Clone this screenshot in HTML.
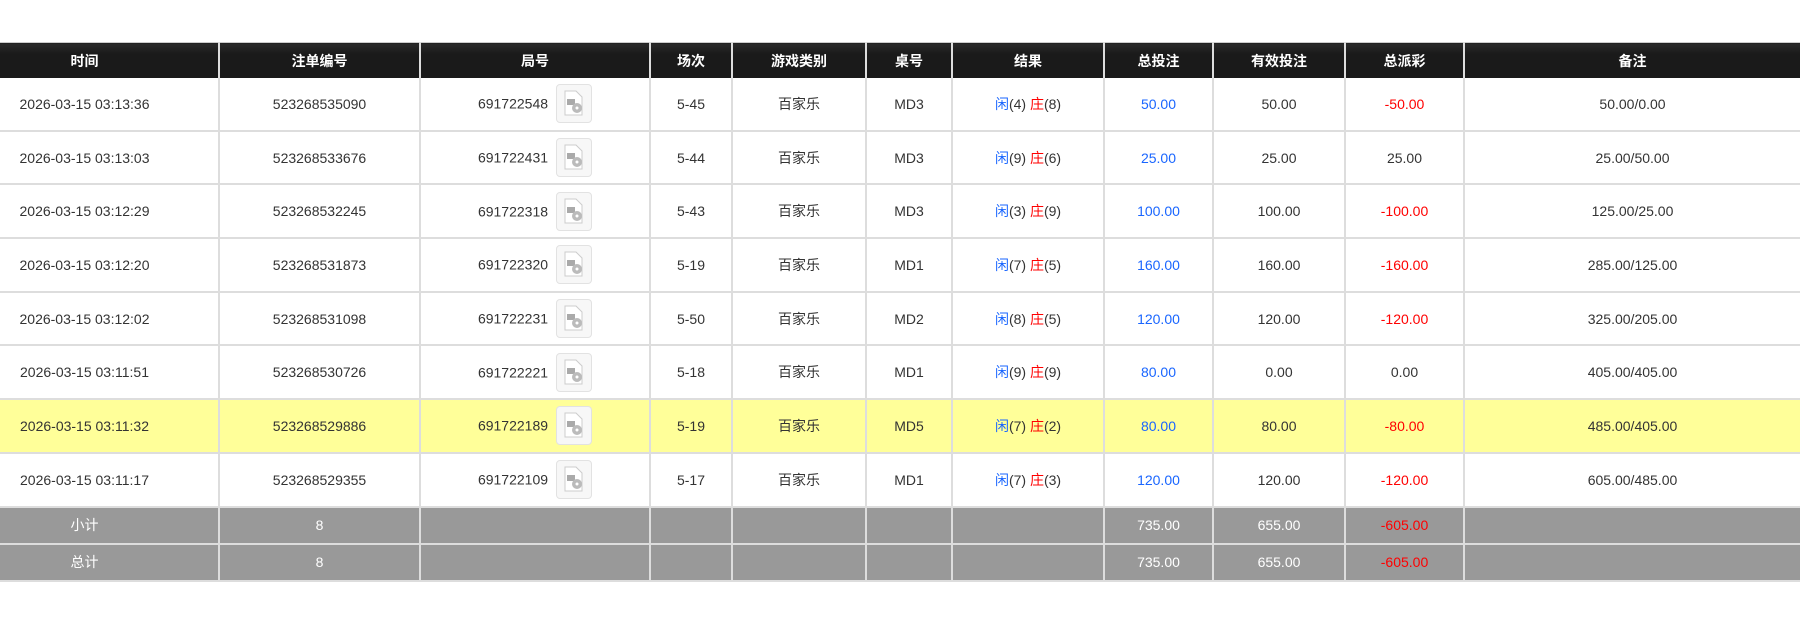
<!DOCTYPE html>
<html><head><meta charset="utf-8"><style>
body{margin:0;background:#fff;width:1800px;height:633px;overflow:hidden;font-family:"Liberation Sans","Noto Sans CJK SC",sans-serif;}
table{position:absolute;top:42px;left:0;width:1800px;border-collapse:collapse;table-layout:fixed;font-size:14px;color:#333;}
th{background:linear-gradient(#2a2a2a,#1a1a1a 30%,#1a1a1a);color:#fff;font-weight:bold;height:35px;padding:0;border-left:2px solid #ddd;border-top:1px solid #ccc;text-align:center;}
th:first-child,td:first-child{border-left:none;padding-right:49px}
td{height:51.7px;padding:0;text-align:center;border-left:2px solid #ddd;border-bottom:2px solid #ddd;}
tr.y td{background:#ffff99}
tr.g td{background:#999;color:#fff;height:35px;border-bottom:2px solid #ddd}
.b{color:#1a66ff}.r{color:#f00}
.ic{display:inline-block;vertical-align:middle;width:34px;height:37px;border:1px solid #e2e2e2;border-radius:4px;background:#f7f7f7;margin-left:8px;position:relative}
.ic svg{position:absolute;left:6px;top:5px}
.n{vertical-align:middle}
</style></head><body>
<table>
<colgroup><col style="width:219px"><col style="width:201px"><col style="width:230px"><col style="width:82px"><col style="width:134px"><col style="width:86px"><col style="width:152px"><col style="width:109px"><col style="width:132px"><col style="width:119px"><col style="width:336px"></colgroup>
<tr><th>时间</th><th>注单编号</th><th>局号</th><th>场次</th><th>游戏类别</th><th>桌号</th><th>结果</th><th>总投注</th><th>有效投注</th><th>总派彩</th><th>备注</th></tr>
<tr><td>2026-03-15 03:13:36</td><td>523268535090</td><td><span class="n">691722548</span><span class="ic"><svg width="22" height="26" viewBox="0 0 22 26"><path d="M2 1h11l6 6v18H2z" fill="#fff" stroke="#ccc"/><rect x="4" y="9" width="8" height="6" fill="#aaa"/><circle cx="14" cy="18" r="5" fill="#bbb"/><circle cx="14" cy="18" r="1.5" fill="#fff"/></svg></span></td><td>5-45</td><td>百家乐</td><td>MD3</td><td><span class="b">闲</span>(4) <span class="r">庄</span>(8)</td><td class="b">50.00</td><td>50.00</td><td class="r">-50.00</td><td>50.00/0.00</td></tr>
<tr><td>2026-03-15 03:13:03</td><td>523268533676</td><td><span class="n">691722431</span><span class="ic"><svg width="22" height="26" viewBox="0 0 22 26"><path d="M2 1h11l6 6v18H2z" fill="#fff" stroke="#ccc"/><rect x="4" y="9" width="8" height="6" fill="#aaa"/><circle cx="14" cy="18" r="5" fill="#bbb"/><circle cx="14" cy="18" r="1.5" fill="#fff"/></svg></span></td><td>5-44</td><td>百家乐</td><td>MD3</td><td><span class="b">闲</span>(9) <span class="r">庄</span>(6)</td><td class="b">25.00</td><td>25.00</td><td>25.00</td><td>25.00/50.00</td></tr>
<tr><td>2026-03-15 03:12:29</td><td>523268532245</td><td><span class="n">691722318</span><span class="ic"><svg width="22" height="26" viewBox="0 0 22 26"><path d="M2 1h11l6 6v18H2z" fill="#fff" stroke="#ccc"/><rect x="4" y="9" width="8" height="6" fill="#aaa"/><circle cx="14" cy="18" r="5" fill="#bbb"/><circle cx="14" cy="18" r="1.5" fill="#fff"/></svg></span></td><td>5-43</td><td>百家乐</td><td>MD3</td><td><span class="b">闲</span>(3) <span class="r">庄</span>(9)</td><td class="b">100.00</td><td>100.00</td><td class="r">-100.00</td><td>125.00/25.00</td></tr>
<tr><td>2026-03-15 03:12:20</td><td>523268531873</td><td><span class="n">691722320</span><span class="ic"><svg width="22" height="26" viewBox="0 0 22 26"><path d="M2 1h11l6 6v18H2z" fill="#fff" stroke="#ccc"/><rect x="4" y="9" width="8" height="6" fill="#aaa"/><circle cx="14" cy="18" r="5" fill="#bbb"/><circle cx="14" cy="18" r="1.5" fill="#fff"/></svg></span></td><td>5-19</td><td>百家乐</td><td>MD1</td><td><span class="b">闲</span>(7) <span class="r">庄</span>(5)</td><td class="b">160.00</td><td>160.00</td><td class="r">-160.00</td><td>285.00/125.00</td></tr>
<tr><td>2026-03-15 03:12:02</td><td>523268531098</td><td><span class="n">691722231</span><span class="ic"><svg width="22" height="26" viewBox="0 0 22 26"><path d="M2 1h11l6 6v18H2z" fill="#fff" stroke="#ccc"/><rect x="4" y="9" width="8" height="6" fill="#aaa"/><circle cx="14" cy="18" r="5" fill="#bbb"/><circle cx="14" cy="18" r="1.5" fill="#fff"/></svg></span></td><td>5-50</td><td>百家乐</td><td>MD2</td><td><span class="b">闲</span>(8) <span class="r">庄</span>(5)</td><td class="b">120.00</td><td>120.00</td><td class="r">-120.00</td><td>325.00/205.00</td></tr>
<tr><td>2026-03-15 03:11:51</td><td>523268530726</td><td><span class="n">691722221</span><span class="ic"><svg width="22" height="26" viewBox="0 0 22 26"><path d="M2 1h11l6 6v18H2z" fill="#fff" stroke="#ccc"/><rect x="4" y="9" width="8" height="6" fill="#aaa"/><circle cx="14" cy="18" r="5" fill="#bbb"/><circle cx="14" cy="18" r="1.5" fill="#fff"/></svg></span></td><td>5-18</td><td>百家乐</td><td>MD1</td><td><span class="b">闲</span>(9) <span class="r">庄</span>(9)</td><td class="b">80.00</td><td>0.00</td><td>0.00</td><td>405.00/405.00</td></tr>
<tr class="y"><td>2026-03-15 03:11:32</td><td>523268529886</td><td><span class="n">691722189</span><span class="ic"><svg width="22" height="26" viewBox="0 0 22 26"><path d="M2 1h11l6 6v18H2z" fill="#fff" stroke="#ccc"/><rect x="4" y="9" width="8" height="6" fill="#aaa"/><circle cx="14" cy="18" r="5" fill="#bbb"/><circle cx="14" cy="18" r="1.5" fill="#fff"/></svg></span></td><td>5-19</td><td>百家乐</td><td>MD5</td><td><span class="b">闲</span>(7) <span class="r">庄</span>(2)</td><td class="b">80.00</td><td>80.00</td><td class="r">-80.00</td><td>485.00/405.00</td></tr>
<tr><td>2026-03-15 03:11:17</td><td>523268529355</td><td><span class="n">691722109</span><span class="ic"><svg width="22" height="26" viewBox="0 0 22 26"><path d="M2 1h11l6 6v18H2z" fill="#fff" stroke="#ccc"/><rect x="4" y="9" width="8" height="6" fill="#aaa"/><circle cx="14" cy="18" r="5" fill="#bbb"/><circle cx="14" cy="18" r="1.5" fill="#fff"/></svg></span></td><td>5-17</td><td>百家乐</td><td>MD1</td><td><span class="b">闲</span>(7) <span class="r">庄</span>(3)</td><td class="b">120.00</td><td>120.00</td><td class="r">-120.00</td><td>605.00/485.00</td></tr>
<tr class="g"><td>小计</td><td>8</td><td></td><td></td><td></td><td></td><td></td><td>735.00</td><td>655.00</td><td class="r" style="color:#f00">-605.00</td><td></td></tr>
<tr class="g"><td>总计</td><td>8</td><td></td><td></td><td></td><td></td><td></td><td>735.00</td><td>655.00</td><td class="r" style="color:#f00">-605.00</td><td></td></tr>
</table>
</body></html>
